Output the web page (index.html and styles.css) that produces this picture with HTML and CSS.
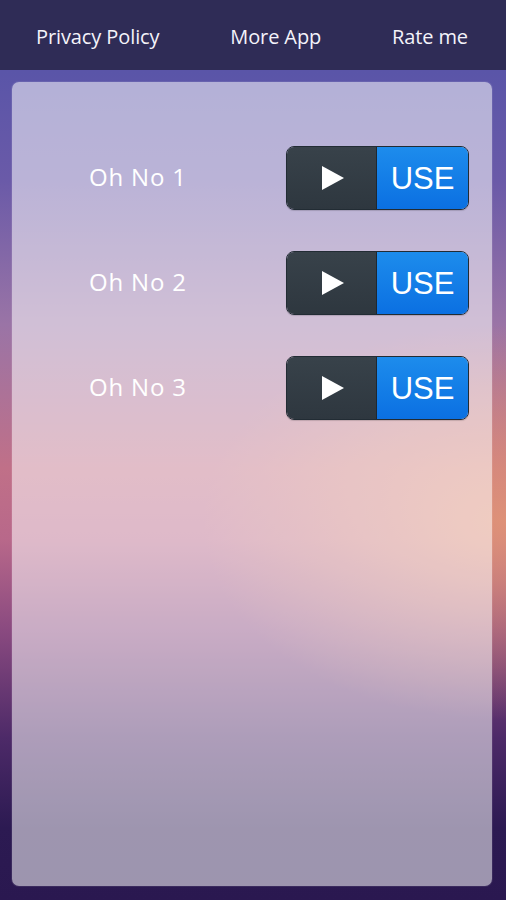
FILE: index.html
```html
<!DOCTYPE html>
<html>
<head>
<meta charset="utf-8">
<link rel="stylesheet" href="styles.css">
</head>
<body>
<div class="page">
  <header class="topbar">
    <span class="nav-item">Privacy Policy</span>
    <span class="nav-item">More App</span>
    <span class="nav-item">Rate me</span>
  </header>
  <main class="card">
    <div class="row">
      <span class="label">Oh No 1</span>
      <div class="btn">
        <span class="play"><svg width="24" height="26" viewBox="0 0 24 26"><polygon points="1,1 23,13 1,25" fill="#fff"/></svg></span>
        <span class="use">USE</span>
      </div>
    </div>
    <div class="row">
      <span class="label">Oh No 2</span>
      <div class="btn">
        <span class="play"><svg width="24" height="26" viewBox="0 0 24 26"><polygon points="1,1 23,13 1,25" fill="#fff"/></svg></span>
        <span class="use">USE</span>
      </div>
    </div>
    <div class="row">
      <span class="label">Oh No 3</span>
      <div class="btn">
        <span class="play"><svg width="24" height="26" viewBox="0 0 24 26"><polygon points="1,1 23,13 1,25" fill="#fff"/></svg></span>
        <span class="use">USE</span>
      </div>
    </div>
  </main>
</div>
</body>
</html>
```
FILE: styles.css
```css
html, body {
  margin: 0;
  padding: 0;
}
body {
  width: 506px;
  height: 900px;
  overflow: hidden;
  font-family: "Open Sans", "Liberation Sans", sans-serif;
  background:
    radial-gradient(ellipse 60% 22% at 100% 58%, rgba(226,150,118,0.9), rgba(226,150,118,0) 100%),
    linear-gradient(180deg,
      #5a55a8 8%,
      #6a5aa8 20%,
      #9a74a6 36%,
      #c07088 52%,
      #b8688a 60%,
      #8a4a80 70%,
      #4d2a68 82%,
      #2c1a52 92%,
      #2a1850 100%);
}
.page {
  display: flex;
  flex-direction: column;
  height: 900px;
}
.topbar {
  height: 70px;
  flex: none;
  background: #2f2c56;
  display: flex;
  align-items: center;
  justify-content: space-between;
  padding: 0 38px 0 36px;
  box-sizing: border-box;
}
.nav-item {
  color: #f4f3fa;
  font-family: "Open Sans", sans-serif;
  font-size: 20px;
  letter-spacing: -0.1px;
  line-height: 1;
  margin-top: 4px;
}
.card {
  margin: 12px 14px 14px 12px;
  flex: 1;
  border-radius: 7px;
  background: rgba(255,255,255,0.54);
  box-shadow: 0 0 0 1px rgba(255,255,255,0.08);
  padding: 64px 23px 0 77px;
  display: flex;
  flex-direction: column;
  gap: 41px;
}
.row {
  display: flex;
  align-items: center;
  justify-content: space-between;
  height: 64px;
}
.label {
  color: #ffffff;
  font-family: "Open Sans", sans-serif;
  font-size: 24px;
  letter-spacing: 0.8px;
  margin-top: -4px;
}
.btn {
  width: 183px;
  height: 64px;
  box-sizing: border-box;
  border-radius: 8px;
  border: 1px solid #222c34;
  overflow: hidden;
  display: flex;
  box-shadow: 0 1px 1px rgba(0,0,0,0.15);
}
.play {
  width: 89px;
  background: linear-gradient(180deg, #38424a, #2e373f);
  display: flex;
  align-items: center;
  justify-content: center;
  border-right: 1px solid #1f2830;
}
.play svg {
  display: block;
  margin-left: 2px;
}
.use {
  flex: 1;
  background: linear-gradient(180deg, #1d8cec, #0b70e2);
  color: #ffffff;
  font-family: "Liberation Sans", Arial, sans-serif;
  font-size: 31px;
  display: flex;
  align-items: center;
  justify-content: center;
  padding-top: 2px;
}
```
